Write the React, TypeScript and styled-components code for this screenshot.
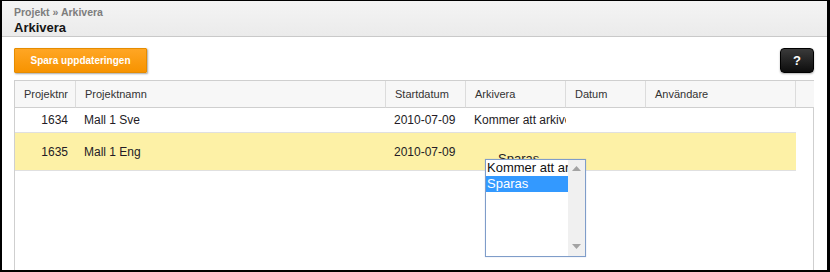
import styled, { createGlobalStyle } from "styled-components";

const GlobalStyle = createGlobalStyle`
  html, body {
    margin: 0;
    padding: 0;
    background: #000;
    font-family: "Liberation Sans", Arial, sans-serif;
  }
`;

const Frame = styled.div`
  margin: 1px 3px 2px 2px;
  height: 269px;
  background: #fff;
  display: flex;
  flex-direction: column;
  overflow: hidden;
`;

const Header = styled.div`
  box-sizing: border-box;
  height: 36px;
  padding: 5px 12px 0;
  background: linear-gradient(#f4f4f4, #ebebeb);
  border-bottom: 1px solid #c9c9c9;
`;

const Crumbs = styled.div`
  font-size: 10.5px;
  font-weight: bold;
  color: #7d7d7d;
  line-height: 13px;
`;

const Title = styled.h1`
  margin: 1px 0 0;
  font-size: 13px;
  font-weight: bold;
  color: #151515;
  line-height: 16px;
`;

const Toolbar = styled.div`
  display: flex;
  justify-content: space-between;
  padding: 11px 13px 0 12px;
`;

const SaveButton = styled.button`
  box-sizing: border-box;
  width: 133px;
  height: 25px;
  border: 1px solid #e58c00;
  border-radius: 1px;
  background: linear-gradient(#ffa624, #f79300);
  box-shadow: 1px 1px 2px rgba(0, 0, 0, 0.35);
  color: #fff;
  font-family: "Liberation Sans", Arial, sans-serif;
  font-size: 10px;
  font-weight: bold;
  cursor: pointer;
`;

const HelpButton = styled.button`
  box-sizing: border-box;
  width: 34px;
  height: 25px;
  border: 1px solid #000;
  border-radius: 4px;
  background: linear-gradient(#3a3a3a, #0d0d0d);
  box-shadow: 0 1px 2px rgba(0, 0, 0, 0.3);
  color: #fff;
  font-family: "Liberation Sans", Arial, sans-serif;
  font-size: 13px;
  font-weight: bold;
  cursor: pointer;
`;

const TableBox = styled.div`
  position: relative;
  flex: 1;
  margin: 7px 13px 0 12px;
  border: 1px solid #cfcfcf;
  border-bottom: none;
`;

const Grid = styled.div`
  display: grid;
  grid-template-columns: 61px 310px 80px 100px 80px 150px 17px;
`;

const HeadCell = styled.div`
  box-sizing: border-box;
  height: 27px;
  padding: 0 9px;
  display: flex;
  align-items: center;
  background: #f7f7f7;
  border-bottom: 1px solid #cfcfcf;
  border-right: 1px solid #dcdcdc;
  font-size: 11px;
  color: #333;

  &:nth-child(7) {
    border-right: none;
  }
`;

const Cell = styled.div<{ $h: number; $hl?: boolean; $right?: boolean }>`
  box-sizing: border-box;
  height: ${(p) => p.$h}px;
  padding: 0 8px;
  display: flex;
  align-items: center;
  justify-content: ${(p) => (p.$right ? "flex-end" : "flex-start")};
  background: ${(p) => (p.$hl ? "#fdf1a6" : "#fff")};
  border-bottom: 1px solid #e0e0e0;
  font-size: 12px;
  color: #231b25;
  white-space: nowrap;
  overflow: hidden;
`;

const Filler = styled.div<{ $h: number }>`
  height: ${(p) => p.$h}px;
`;

const StatusCell = styled(Cell)`
  align-items: flex-start;
  padding: 18px 0 0 32px;
  font-size: 13px;
`;

const ListBox = styled.div`
  position: absolute;
  left: 470px;
  top: 78px;
  box-sizing: border-box;
  width: 101px;
  height: 98px;
  border: 1px solid #7f9dc9;
  background: #fff;
  display: flex;
  box-shadow: 0 0 1px rgba(90, 130, 200, 0.4);
`;

const Options = styled.div`
  flex: 1;
  overflow: hidden;
`;

const Option = styled.div<{ $sel?: boolean }>`
  height: 16px;
  line-height: 16px;
  padding-left: 1px;
  font-size: 13px;
  white-space: nowrap;
  overflow: hidden;
  color: ${(p) => (p.$sel ? "#fff" : "#111")};
  background: ${(p) => (p.$sel ? "#3399ff" : "transparent")};
`;

const ScrollBar = styled.div`
  width: 17px;
  background: #f0f0f0;
  display: flex;
  flex-direction: column;
  justify-content: space-between;
  align-items: center;
  padding: 6px 0 7px;
`;

const Arrow = ({ down }: { down?: boolean }) => (
  <svg width="9" height="5" viewBox="0 0 9 5">
    <path d={down ? "M0 0 L9 0 L4.5 5 Z" : "M0 5 L9 5 L4.5 0 Z"} fill="#a3a3a3" />
  </svg>
);

const rows = [
  { nr: "1634", name: "Mall 1 Sve", start: "2010-07-09", status: "Kommer att arkivera", hl: false },
  { nr: "1635", name: "Mall 1 Eng", start: "2010-07-09", status: "Sparas", hl: true },
];

const heads = ["Projektnr", "Projektnamn", "Startdatum", "Arkivera", "Datum", "Användare", ""];

function App() {
  return (
    <>
      <GlobalStyle />
      <Frame>
        <Header>
          <Crumbs>Projekt » Arkivera</Crumbs>
          <Title>Arkivera</Title>
        </Header>
        <Toolbar>
          <SaveButton>Spara uppdateringen</SaveButton>
          <HelpButton>?</HelpButton>
        </Toolbar>
        <TableBox>
          <Grid>
            {heads.map((h, i) => (
              <HeadCell key={i}>{h}</HeadCell>
            ))}
            {rows.map((r) => {
              const h = r.hl ? 38 : 25;
              return [
                <Cell key={r.nr + "a"} $h={h} $hl={r.hl} $right>
                  {r.nr}
                </Cell>,
                <Cell key={r.nr + "b"} $h={h} $hl={r.hl}>
                  {r.name}
                </Cell>,
                <Cell key={r.nr + "c"} $h={h} $hl={r.hl}>
                  {r.start}
                </Cell>,
                r.hl ? (
                  <StatusCell key={r.nr + "d"} $h={h} $hl>
                    {r.status}
                  </StatusCell>
                ) : (
                  <Cell key={r.nr + "d"} $h={h}>
                    {r.status}
                  </Cell>
                ),
                <Cell key={r.nr + "e"} $h={h} $hl={r.hl} />,
                <Cell key={r.nr + "f"} $h={h} $hl={r.hl} />,
                <Filler key={r.nr + "g"} $h={h} />,
              ];
            })}
          </Grid>
          <ListBox>
            <Options>
              <Option>Kommer att arkivera</Option>
              <Option $sel>Sparas</Option>
            </Options>
            <ScrollBar>
              <Arrow />
              <Arrow down />
            </ScrollBar>
          </ListBox>
        </TableBox>
      </Frame>
    </>
  );
}

export default App;
